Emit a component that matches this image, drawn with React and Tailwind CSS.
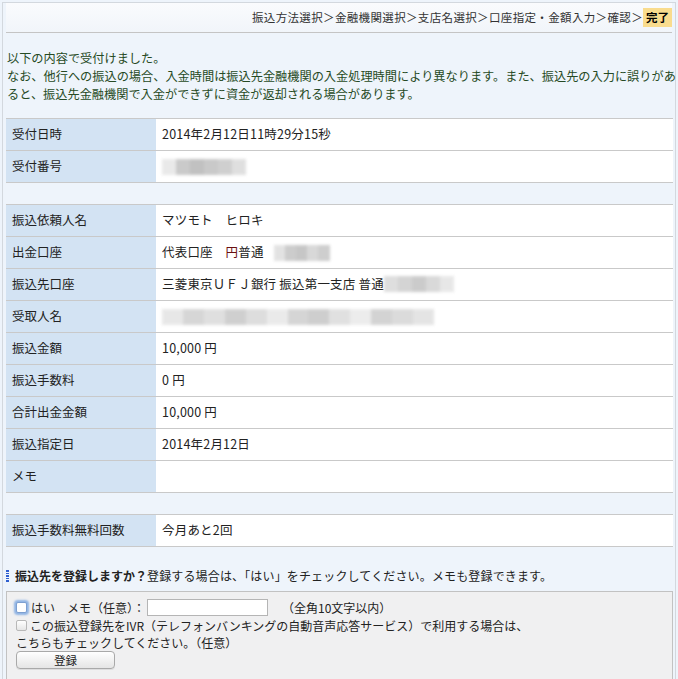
import React from "react"

const Blur = ({ w, shades }) => (
    <div className="flex h-[16px] blur-[1.5px] opacity-80" style={{ width: w }}>
        {shades.map((c, i) => (
            <div key={i} className="flex-1 h-full" style={{ background: c }} />
        ))}
    </div>
)

function Row({ label, children }) {
    return (
        <div className="flex border-t border-[#c9c9c9] h-[32px]">
            <div className="w-[150px] shrink-0 bg-[#d3e3f3] flex items-center pl-[6px]">{label}</div>
            <div className="flex-1 bg-white flex items-center pl-[6px] tracking-[0.2px]">{children}</div>
        </div>
    )
}

export default function App() {
    return (
        <div className="w-[678px] h-[679px] overflow-hidden bg-[#eef4fb] text-[#222] text-[12.5px] font-['Noto_Sans_CJK_JP',sans-serif]">
            <div className="mt-[2px] ml-[2px] w-[674px] h-[677px] border-l border-t border-r border-[#d3d8de]">
                {/* breadcrumb */}
                <div className="mx-[3px] h-[30px] flex justify-end items-center border-b border-[#c4c4c4] bg-gradient-to-b from-[#fafbfd] to-[#f1f5fa] text-[11.5px] text-[#333]">
                    <span className="tracking-[0.35px]">振込方法選択＞金融機関選択＞支店名選択＞口座指定・金額入力＞確認＞</span>
                    <span className="bg-[#f9dc8e] font-bold px-[3px] leading-[19px] text-black">完了</span>
                </div>

                {/* intro */}
                <div className="pl-[4px] pt-[16px] leading-[18px] text-[12.2px] text-[#264a24] whitespace-nowrap">
                    以下の内容で受付けました。<br />
                    なお、他行への振込の場合、入金時間は振込先金融機関の入金処理時間により異なります。また、振込先の入力に誤りがあ<br />
                    ると、振込先金融機関で入金ができずに資金が返却される場合があります。
                </div>

                {/* table */}
                <div className="mt-[15px] ml-[3px] mr-[2px]">
                    <div className="border-b border-[#c9c9c9]">
                        <Row label="受付日時">2014年2月12日11時29分15秒</Row>
                        <Row label="受付番号">
                            <Blur w="84px" shades={["#e4e4e4", "#bdbdbd", "#b2b2b2", "#bcbcbc", "#c4c4c4", "#d8d8d8"]} />
                        </Row>
                    </div>
                    <div className="h-[21px]" />
                    <div className="border-t border-b border-[#c9c9c9]">
                        <div className="-mt-px">
                            <Row label="振込依頼人名">マツモト　ヒロキ</Row>
                            <Row label="出金口座">
                                <span>代表口座　<span className="text-[#6a1010]">円</span>普通</span>
                                <div className="ml-[10px]">
                                    <Blur w="56px" shades={["#dcdcdc", "#c0c0c0", "#b9b9b9", "#cfcfcf", "#c2c2c2"]} />
                                </div>
                            </Row>
                            <Row label="振込先口座">
                                <span>三菱東京ＵＦＪ銀行 振込第一支店 普通</span>
                                <div className="-mt-[2px]">
                                    <Blur w="70px" shades={["#d6d6d6", "#cacaca", "#bfbfbf", "#d0d0d0", "#e2e2e2"]} />
                                </div>
                            </Row>
                            <Row label="受取人名">
                                <Blur w="272px" shades={["#e2e2e2", "#cdcdcd", "#d8d8d8", "#c4c4c4", "#d5d5d5", "#e6e6e6", "#cbcbcb", "#c3c3c3", "#d9d9d9", "#e8e8e8", "#c9c9c9", "#d3d3d3", "#dedede"]} />
                            </Row>
                            <Row label="振込金額">10,000 円</Row>
                            <Row label="振込手数料">0 円</Row>
                            <Row label="合計出金金額">10,000 円</Row>
                            <Row label="振込指定日">2014年2月12日</Row>
                            <Row label="メモ"></Row>
                        </div>
                    </div>
                    <div className="h-[21px]" />
                    <div className="border-b border-[#c9c9c9]">
                        <Row label="振込手数料無料回数">今月あと2回</Row>
                    </div>
                </div>

                {/* register */}
                <div className="mt-[21px] ml-[3px] flex items-center h-[16px] text-[12px]">
                    <div className="flex flex-col gap-[1px] w-[3px] mr-[6px]">
                        <div className="h-[1.5px] bg-[#2f5fd0]" />
                        <div className="h-[1.5px] bg-[#2f5fd0]" />
                        <div className="h-[1.5px] bg-[#2f5fd0]" />
                        <div className="h-[1.5px] bg-[#2f5fd0]" />
                        <div className="h-[1.5px] bg-[#2f5fd0]" />
                    </div>
                    <span className="font-bold">振込先を登録しますか？</span>
                    <span className="tracking-[0.15px]">登録する場合は、「はい」をチェックしてください。メモも登録できます。</span>
                </div>

                <div className="mt-[7px] ml-[3px] mr-[2px] h-[100px] border border-[#c2c2c2] bg-[#f0f0f1] pl-[9px] pt-[7px] text-[12px]">
                    <div className="flex items-center h-[17px]">
                        <span className="w-[11px] h-[11px] rounded-[2px] border border-[#7d9fd0] bg-white shadow-[0_0_2px_2px_rgba(80,140,220,0.6)] mr-[4px]" />
                        <span>はい　メモ（任意）：</span>
                        <input className="ml-[2px] w-[121px] h-[17px] bg-white border border-[#b5b5b5] outline-none" />
                        <span className="ml-[14px]">（全角10文字以内）</span>
                    </div>
                    <div className="flex items-center h-[17px] mt-[1px]">
                        <span className="w-[11px] h-[11px] rounded-[2px] border border-[#b8b8b8] bg-gradient-to-b from-white to-[#e6e6e6] mr-[3px]" />
                        <span>この振込登録先をIVR（テレフォンバンキングの自動音声応答サービス）で利用する場合は、</span>
                    </div>
                    <div className="h-[17px] leading-[17px]">こちらもチェックしてください。（任意）</div>
                    <button className="w-[99px] h-[18px] rounded-[4px] border border-[#a9a9a9] bg-gradient-to-b from-white to-[#e5e5e5] text-[11.5px] leading-[16px] shadow-[0_1px_0_rgba(0,0,0,0.08)]">登録</button>
                </div>
            </div>
        </div>
    )
}
